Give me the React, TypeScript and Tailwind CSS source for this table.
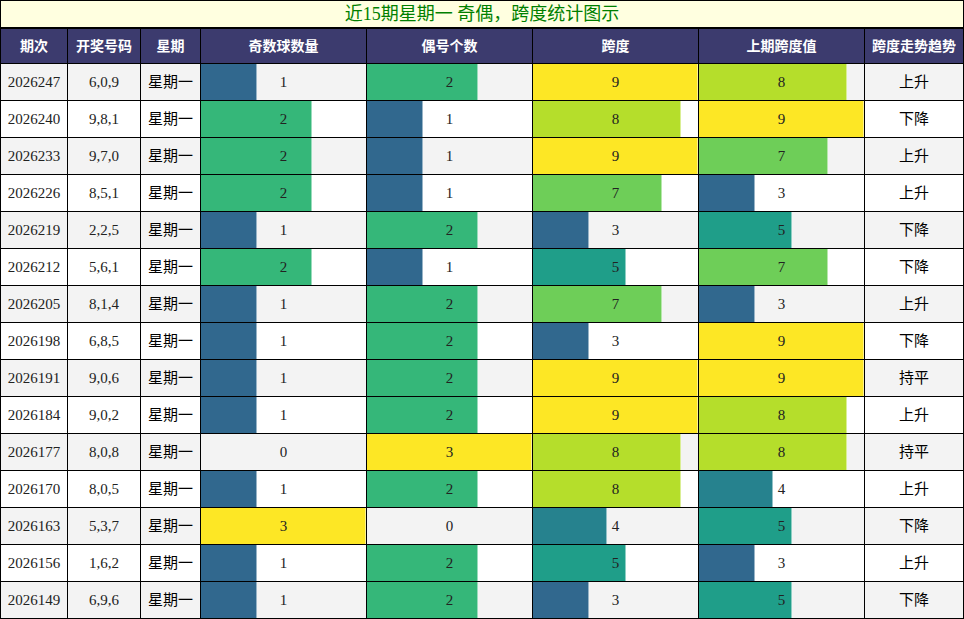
import React from "react";

type Row = {
  id: string;
  nums: string;
  odd: number;
  even: number;
  span: number;
  prev: number;
  trend: string;
};

const rows: Row[] = [
  { id: "2026247", nums: "6,0,9", odd: 1, even: 2, span: 9, prev: 8, trend: "上升" },
  { id: "2026240", nums: "9,8,1", odd: 2, even: 1, span: 8, prev: 9, trend: "下降" },
  { id: "2026233", nums: "9,7,0", odd: 2, even: 1, span: 9, prev: 7, trend: "上升" },
  { id: "2026226", nums: "8,5,1", odd: 2, even: 1, span: 7, prev: 3, trend: "上升" },
  { id: "2026219", nums: "2,2,5", odd: 1, even: 2, span: 3, prev: 5, trend: "下降" },
  { id: "2026212", nums: "5,6,1", odd: 2, even: 1, span: 5, prev: 7, trend: "下降" },
  { id: "2026205", nums: "8,1,4", odd: 1, even: 2, span: 7, prev: 3, trend: "上升" },
  { id: "2026198", nums: "6,8,5", odd: 1, even: 2, span: 3, prev: 9, trend: "下降" },
  { id: "2026191", nums: "9,0,6", odd: 1, even: 2, span: 9, prev: 9, trend: "持平" },
  { id: "2026184", nums: "9,0,2", odd: 1, even: 2, span: 9, prev: 8, trend: "上升" },
  { id: "2026177", nums: "8,0,8", odd: 0, even: 3, span: 8, prev: 8, trend: "持平" },
  { id: "2026170", nums: "8,0,5", odd: 1, even: 2, span: 8, prev: 4, trend: "上升" },
  { id: "2026163", nums: "5,3,7", odd: 3, even: 0, span: 4, prev: 5, trend: "下降" },
  { id: "2026156", nums: "1,6,2", odd: 1, even: 2, span: 5, prev: 3, trend: "上升" },
  { id: "2026149", nums: "6,9,6", odd: 1, even: 2, span: 3, prev: 5, trend: "下降" },
];

const countColor: Record<number, string> = {
  1: "#31688e",
  2: "#35b779",
  3: "#fde725",
};

const spanColor: Record<number, string> = {
  3: "#31688e",
  4: "#26828e",
  5: "#1f9e89",
  6: "#2db27d",
  7: "#6ece58",
  8: "#b5de2b",
  9: "#fde725",
};

const font = { fontFamily: '"Liberation Serif", "Noto Sans CJK SC", serif' };

function BarCell({ value, max, color }: { value: number; max: number; color?: string }) {
  const pct = (value / max) * 100;
  const width = value >= max ? "100%" : `calc(${pct}% + 1px)`;
  return (
    <div className="relative h-full border-r border-black">
      {value > 0 && (
        <div
          className="absolute left-0 top-0 h-full border-r border-white/50"
          style={{ width, backgroundColor: color }}
        />
      )}
      <div className="relative flex h-full items-center justify-center text-[15px] text-[#222]">
        {value}
      </div>
    </div>
  );
}

const grid = "grid grid-cols-[67px_73px_60px_166px_166px_166px_166px_99px]";

export default function App() {
  const headers = ["期次", "开奖号码", "星期", "奇数球数量", "偶号个数", "跨度", "上期跨度值", "跨度走势趋势"];
  return (
    <div className="w-[964px] h-[619px] bg-white" style={font}>
      <div className="h-[29px] border-t border-l border-r border-b-2 border-black bg-[#ffffe0] flex items-center justify-center text-[18px] text-[#008000] leading-none">
        近15期星期一 奇偶，跨度统计图示
      </div>
      <div className={`${grid} h-[35px] border-l border-b border-black bg-[#3c3b6e]`}>
        {headers.map((h) => (
          <div
            key={h}
            className="flex items-center justify-center border-r border-black text-[14px] font-bold text-white"
          >
            {h}
          </div>
        ))}
      </div>
      {rows.map((r, i) => (
        <div
          key={r.id}
          className={`${grid} h-[37px] border-l border-b border-black text-[15px] text-[#222] ${
            i % 2 === 0 ? "bg-[#f3f3f3]" : "bg-white"
          }`}
        >
          <div className="flex items-center justify-center border-r border-black">{r.id}</div>
          <div className="flex items-center justify-center border-r border-black">{r.nums}</div>
          <div className="flex items-center justify-center border-r border-black text-black">星期一</div>
          <BarCell value={r.odd} max={3} color={countColor[r.odd]} />
          <BarCell value={r.even} max={3} color={countColor[r.even]} />
          <BarCell value={r.span} max={9} color={spanColor[r.span]} />
          <BarCell value={r.prev} max={9} color={spanColor[r.prev]} />
          <div className="flex items-center justify-center border-r border-black text-black">{r.trend}</div>
        </div>
      ))}
    </div>
  );
}
